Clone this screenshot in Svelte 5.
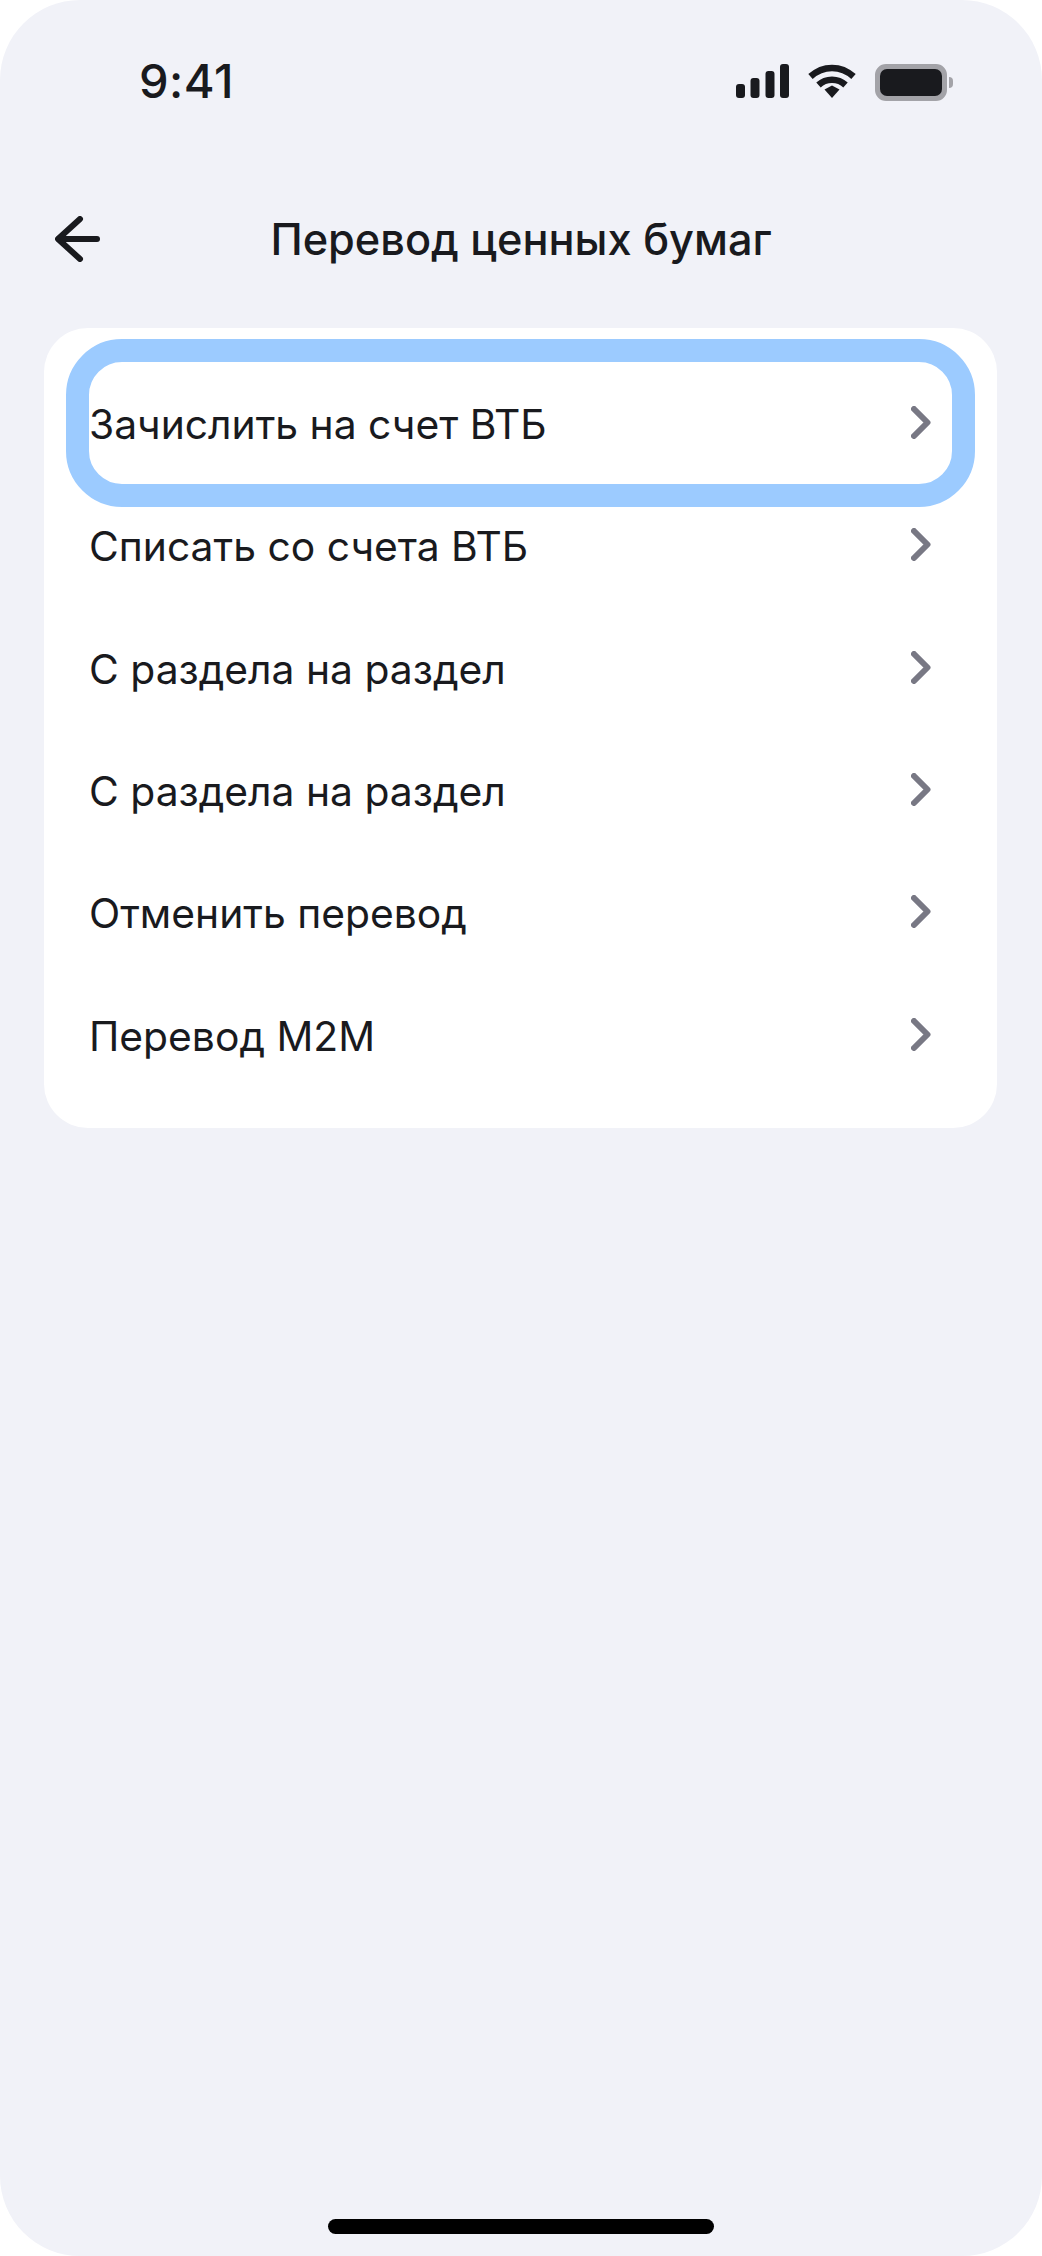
<script>
  const rows = ['Зачислить на счет ВТБ','Списать со счета ВТБ','С раздела на раздел','С раздела на раздел','Отменить перевод','Перевод М2М'];
</script>

<div class="phone">
  <div class="status">
    <span class="time">9:41</span>
    <div class="sys">
      <svg width="53" height="34" viewBox="0 0 53 34" fill="#191a1e"><rect x="0" y="20" width="9" height="14" rx="3"/><rect x="14.5" y="14" width="9" height="20" rx="3"/><rect x="29.5" y="7" width="9" height="27" rx="3"/><rect x="44" y="0" width="9" height="34" rx="3"/></svg>
      <svg class="wifi" width="48" height="34" viewBox="0 0 48 34" fill="none" stroke="#191a1e" stroke-width="6.5"><path d="M2.5 12.5C15 1 33 1 45.5 12.5"/><path d="M10.5 21C18 14 30 14 37.5 21"/><path d="M16.5 25.5L24 21.5L31.5 25.5L24 34Z" fill="#191a1e" stroke="none"/></svg>
      <div class="batt"><div class="fill"></div></div>
      <div class="cap"></div>
    </div>
  </div>
  <header>
    <svg class="back" width="46" height="46" viewBox="0 0 46 46" fill="none" stroke="#191a1e" stroke-width="6" stroke-linecap="round" stroke-linejoin="round"><path d="M25 3L3 23L25 43"/><path d="M4 23H42"/></svg>
    <h1>Перевод ценных бумаг</h1>
  </header>
  <div class="card">
    {#each rows as r, i}
      <div class="row">
        {#if i === 0}<span class="hl"></span>{/if}
        <span class="label">{r}</span>
        <svg class="chev" width="20" height="33" viewBox="0 0 20 33" fill="none" stroke="#787884" stroke-width="6" stroke-linecap="round" stroke-linejoin="round"><path d="M3 3L16.5 16.5L3 30"/></svg>
      </div>
    {/each}
  </div>
  <div class="home"></div>
</div>

<style>
  :global(body){margin:0;background:#fff}
  .phone{position:relative;box-sizing:border-box;width:1042px;height:2256px;background:#f1f2f8;border-radius:80px;overflow:hidden;font-family:Inter,"Noto Sans",sans-serif;color:#191a1e}
  .status{height:161px;box-sizing:border-box;padding:58px 89px 0 139px;display:flex;justify-content:space-between;align-items:flex-start}
  .time{font-size:47px;font-weight:500;line-height:46px;letter-spacing:.5px}
  .sys{display:flex;align-items:flex-start;margin-top:6px}
  .wifi{margin-left:19px}
  .batt{box-sizing:border-box;width:72px;height:37px;margin-left:19px;border:5px solid #a3a3a8;border-radius:11px;background:#a3a3a8}
  .fill{width:100%;height:100%;background:#191a1e;border-radius:7px}
  .cap{width:4px;height:11px;margin:13px 0 0 2px;background:#a3a3a8;border-radius:0 6px 6px 0}
  header{height:167px;display:flex;align-items:flex-start;position:relative}
  .back{position:absolute;left:55px;top:55px}
  h1{margin:0;width:100%;text-align:center;font-size:43.3px;font-weight:500;line-height:50px;padding-top:53px}
  .card{margin:0 45px 0 44px;height:800px;box-sizing:border-box;background:#fff;border-radius:44px;padding:34px 45px 0 45px}
  .row{position:relative;height:122.3px;display:flex;align-items:center;justify-content:space-between}
  .label{position:relative;font-size:40.8px;font-weight:400;line-height:48px;padding-top:2px}
  .hl{position:absolute;left:-23px;right:-23px;top:-23px;bottom:-23px;border:23px solid #9ccbff;border-radius:56px;box-sizing:border-box}
  .chev{position:relative;margin:0 21px 1px 0}
  .home{position:absolute;left:328px;top:2219px;width:386px;height:15px;background:#000;border-radius:8px}
</style>
